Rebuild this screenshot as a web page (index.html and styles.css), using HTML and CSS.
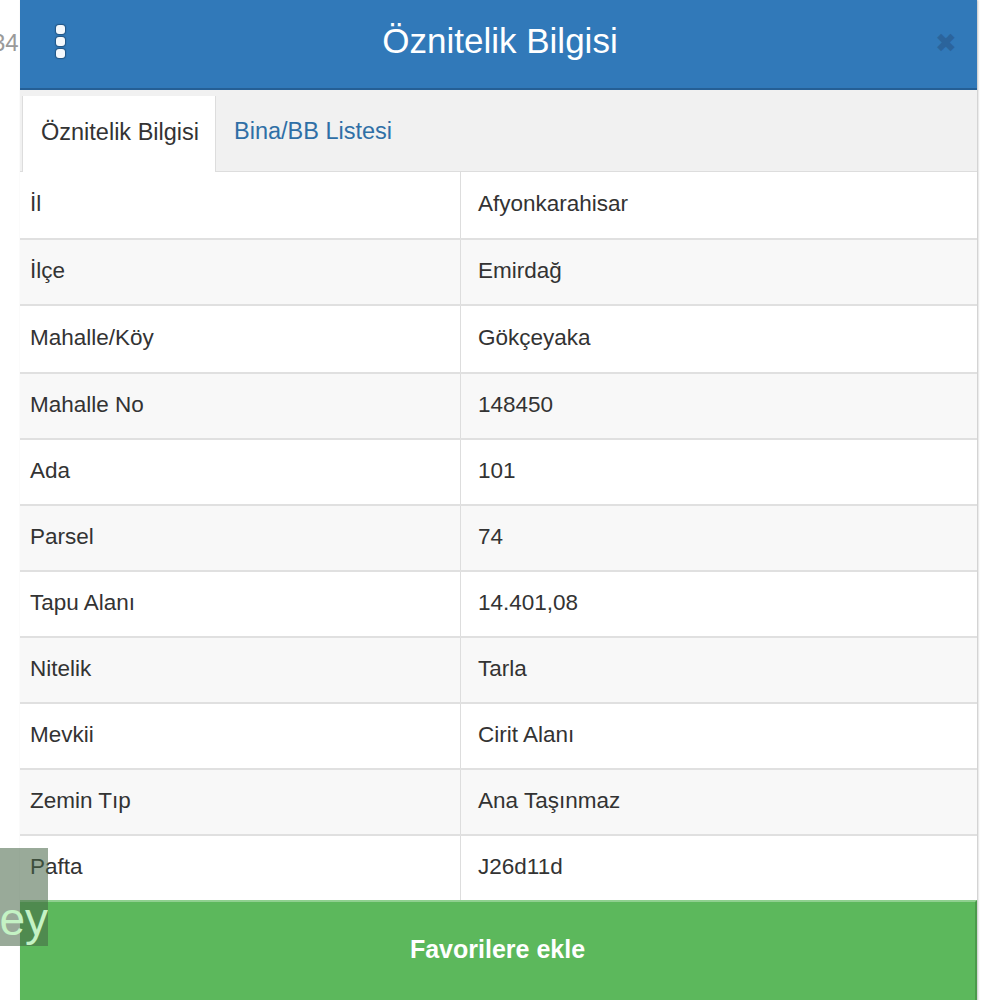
FILE: index.html
```html
<!DOCTYPE html>
<html>
<head>
  <title>Öznitelik Bilgisi</title>
  <meta name="viewport" content="width=device-width, initial-scale=1.0">
  <link rel="stylesheet" href="styles.css">
</head>
<body>

  <span class="behind-text">34</span>

  <div class="modal">
    <div class="modal-header">
      <span class="kebab"><i></i><i></i><i></i></span>
      <h1>Öznitelik Bilgisi</h1>
      <span class="close">&#10006;</span>
    </div>

    <div class="tabs">
      <div class="tab active">Öznitelik Bilgisi</div>
      <div class="tab">Bina/BB Listesi</div>
    </div>

    <table class="info-table">
      <tr><td>İl</td><td>Afyonkarahisar</td></tr>
      <tr><td>İlçe</td><td>Emirdağ</td></tr>
      <tr><td>Mahalle/Köy</td><td>Gökçeyaka</td></tr>
      <tr><td>Mahalle No</td><td>148450</td></tr>
      <tr><td>Ada</td><td>101</td></tr>
      <tr><td>Parsel</td><td>74</td></tr>
      <tr><td>Tapu Alanı</td><td>14.401,08</td></tr>
      <tr><td>Nitelik</td><td>Tarla</td></tr>
      <tr><td>Mevkii</td><td>Cirit Alanı</td></tr>
      <tr><td>Zemin Tıp</td><td>Ana Taşınmaz</td></tr>
      <tr><td>Pafta</td><td>J26d11d</td></tr>
    </table>

    <button class="fav-button">Favorilere ekle</button>
  </div>

  <div class="watermark">ey</div>

</body>
</html>
```

FILE: styles.css
```css
body {
  margin: 0;
  background-color: #fff;
  font-family: "Liberation Sans", Arial, sans-serif;
  color: #333;
  overflow: hidden;
}
.behind-text {
  position: absolute;
  left: -8px;
  top: 29px;
  font-size: 24px;
  color: #9a9a9a;
}
.modal {
  position: relative;
  z-index: 1;
  margin-left: 20px;
  width: 957px;
  background-color: #fff;
  box-shadow: 1px 0 2px rgba(0, 0, 0, 0.25);
}
.modal-header {
  height: 88px;
  background-color: #3179b9;
  border-bottom: 2px solid #255f95;
  display: flex;
  align-items: center;
  padding: 0 20px 0 36px;
}
.modal-header h1 {
  flex: 1;
  margin: 0;
  text-align: center;
  color: #fff;
  font-size: 35px;
  font-weight: normal;
  padding-bottom: 6px;
}
.kebab {
  display: flex;
  flex-direction: column;
  gap: 3px;
  margin-top: -6px;
}
.kebab i {
  display: block;
  width: 9px;
  height: 9px;
  border-radius: 3px;
  background-color: #f4f8fc;
  box-shadow: 0 0 1px 1px rgba(20, 50, 80, 0.5);
}
.close {
  font-size: 26px;
  color: #2a5f95;
  opacity: 0.8;
  margin-top: -2px;
}
.tabs {
  display: flex;
  height: 75px;
  padding-top: 6px;
  padding-left: 2px;
  background-color: #f1f1f1;
  border-bottom: 1px solid #ddd;
}
.tab {
  display: flex;
  align-items: center;
  padding: 0 20px 4px 18px;
  font-size: 23.5px;
  color: #2f6fa6;
  white-space: nowrap;
}
.tab.active {
  padding-right: 16px;
  background-color: #fff;
  color: #333;
  border-left: 1px solid #ddd;
  border-right: 1px solid #ddd;
  margin-bottom: -1px;
}
.info-table {
  width: 100%;
  border-collapse: collapse;
  font-size: 22.5px;
}
.info-table td {
  height: 62px;
  padding: 0 0 2px 10px;
  border-top: 2px solid #e0e0e0;
}
.info-table tr:first-child td {
  border-top: none;
  height: 64px;
}
.info-table tr:nth-child(3) td {
  height: 64px;
}
.info-table td:first-child {
  width: 430px;
  border-right: 1px solid #ddd;
}
.info-table td:last-child {
  padding-left: 17px;
}
.info-table tr:nth-child(even) td {
  background-color: #f8f8f8;
}
.fav-button {
  display: block;
  width: 100%;
  height: 104px;
  margin-top: 0;
  border: none;
  border-top: 2px solid #8fd08f;
  border-right: 2px solid #4a9a4a;
  background-color: #5cb85c;
  color: #fff;
  font-family: "Liberation Sans", Arial, sans-serif;
  font-size: 25px;
  font-weight: bold;
  padding-bottom: 8px;
}
.watermark {
  position: absolute;
  z-index: 2;
  left: 0;
  top: 848px;
  width: 48px;
  height: 54px;
  padding-top: 44px;
  overflow: hidden;
  background-color: rgba(70, 100, 70, 0.55);
  color: #c4f2c4;
  font-size: 46px;
  line-height: 54px;
  text-align: right;
  white-space: nowrap;
  direction: rtl;
}
```
